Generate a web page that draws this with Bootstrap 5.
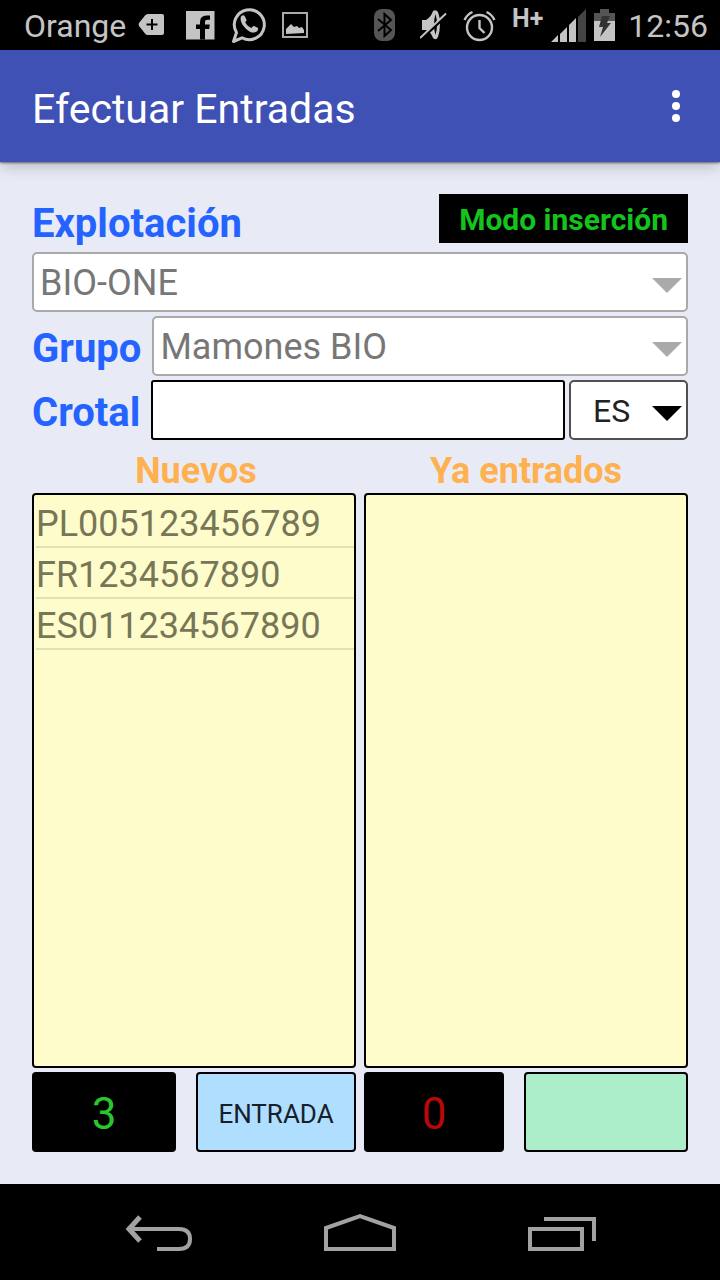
<!DOCTYPE html>
<html lang="es">
<head>
<meta charset="utf-8">
<meta name="viewport" content="width=device-width, initial-scale=1">
<title>Efectuar Entradas</title>
<link href="https://cdn.jsdelivr.net/npm/bootstrap@5.3.0/dist/css/bootstrap.min.css" rel="stylesheet">
<style>
  body { font-family: Roboto, "Noto Sans", sans-serif; background: #e8ebf5; line-height: 1.2; }
  svg { display: block; flex: none; }
  .status { height: 50px; padding: 2px 12px 0 24px; background: #000; color: #c4c4c4; font-size: 32px; }
  .status-network { height: 34px; font-size: 25px; font-weight: 700; line-height: 20px; }
  .gap-status { gap: 12px; }
  .app-bar { height: 112px; padding: 0 32px; background: #3f51b5; color: #fff; box-shadow: 0 1px 2px rgba(0,0,0,.5), 0 4px 14px rgba(0,0,0,.22); }
  .app-title { padding-top: 5px; font-size: 41px; font-weight: 400; line-height: 48px; }
  .menu-btn { width: 24px; height: 40px; }
  .content { padding: 32px; }
  .field-label { padding-top: 6px; color: #2463ff; font-size: 40px; font-weight: 700; line-height: 48px; }
  .mode { background: #000; color: #14c31d; font-size: 30px; font-weight: 700; padding: 2px 20px 0; height: 49px; }
  .field { height: 60px; border: 2px solid #a9a9a9; border-radius: 5px; background-color: #fff; color: #777; font-size: 36px; line-height: 40px; padding: 6px 40px 4px 6px; box-shadow: none; }
  .field.form-select { background-image: url("data:image/svg+xml,%3Csvg xmlns='http://www.w3.org/2000/svg' viewBox='0 0 30 15'%3E%3Cpath fill='%23aaa' d='M0 0h30L15 15z'/%3E%3C/svg%3E"); background-size: 30px 15px; background-position: right 4px top 24px; opacity: 1; }
  .field.form-select:disabled { background-color: #fff; color: #777; }
  .field-code { border-color: #000; border-radius: 3px; color: #222; }
  .field.field-country { width: 119px; border-color: #505050; color: #222; font-size: 32px; padding-left: 22px; background-image: url("data:image/svg+xml,%3Csvg xmlns='http://www.w3.org/2000/svg' viewBox='0 0 30 15'%3E%3Cpath d='M0 0h30L15 15z'/%3E%3C/svg%3E"); }
  .list-title { height: 53px; padding-top: 9px; color: #ffb04f; font-size: 36px; font-weight: 700; line-height: 44px; }
  .panel { border: 2px solid #000; border-radius: 4px; background: #fefccb; padding: 2px 0 0 2px; }
  .panel li { height: 51px; border-bottom: 2px solid #e2e1b4; color: #777656; font-size: 36px; line-height: 54px; }
  .counter { height: 80px; padding-top: 4px; border-radius: 4px; background: #000; font-size: 44px; }
  .counter-new { color: #26c72f; }
  .counter-done { color: #b90808; }
  .action { height: 80px; border: 2px solid #000; border-radius: 4px; color: #16202a; font-size: 26px; }
  .action-entry { width: 160px; background: #b0deff; }
  .action-done { width: 164px; background: #abeec9; }
  .gap-xs { gap: 4px; }
  .gap-field { gap: 11px; }
  .gap-block { gap: 20px; }
  .nav-keys { height: 96px; background: #000; padding: 2px 58px 0; }
</style>
</head>
<body>
<div class="min-vh-100 d-flex flex-column">
  <div class="status d-flex align-items-center justify-content-between">
    <div class="d-flex align-items-center">
      <span class="me-2 pe-1">Orange</span>
      <svg class="me-3" width="32" height="24" viewBox="0 0 32 24" fill="#c4c4c4"><path fill-rule="evenodd" d="M10 0h14q2 0 2 2v17q0 2-2 2H10q-2 0-3-1.500L1 12q-.8-1.500 0-3l6-7.500Q8 0 10 0zM13 5v4.500H8.500v2H13V16h2v-4.500h4.500v-2H15V5z"/></svg>
      <svg class="me-3" width="29" height="29" viewBox="0 0 29 29"><path fill="#c4c4c4" d="M0 0h28.500v28.500H0z"/><path d="M14 28.500V18h-4v-4.500h4V11q0-6.500 6.500-6.500H24v4.200h-2.500q-2.500 0-2.500 2v2.800h4.800l-.6 4.500H19v10.500z" fill="#000"/></svg>
      <svg class="me-3" width="35" height="38" viewBox="0 0 35 38"><path d="M2.500 34.500 5.500 25.500A15 15 0 1 1 11 30.800z" fill="none" stroke="#c4c4c4" stroke-width="3" stroke-linejoin="round"/><path fill="#c4c4c4" d="M10 9.500q1.500-2 3.500-.8l2 4q.3 1-1.300 2.600 2.300 4.400 6.300 5.700l2-2.300 4.600 2.300q.6 3.700-4 4.500-3.600.4-8-3.600-7-6.400-5.100-12.400z"/></svg>
      <svg width="26" height="28" viewBox="0 0 26 28"><path d="M1 1h24v24H1z" fill="none" stroke="#aaa" stroke-width="2"/><path fill="#c4c4c4" d="M4 22v-5l5-5 3 3 3-1 2 2 3-1 2 3v3z"/></svg>
    </div>
    <div class="d-flex align-items-center">
      <svg width="22" height="34" viewBox="0 0 22 34"><rect width="21" height="32" rx="8" fill="#555"/><path d="m4 10 13 11-6.500 6V5l6.500 6L4 22" fill="none" stroke="#000" stroke-width="2"/></svg>
      <svg class="ms-4" width="27" height="34" viewBox="0 0 27 34"><path d="M2 11h4q5-3 7-9 3-2 5 1 2 5 2 12t-2 13q-2 4-5 1-2-6-7-8H2z" fill="#c4c4c4"/><path d="M15.500 5q3 10 0 21-3-11 0-21z" fill="#000"/><path d="M0 31 27 6" stroke="#000" stroke-width="3"/><path d="M0 29 26 4.500" stroke="#c4c4c4" stroke-width="2"/></svg>
      <svg class="ms-3 me-3" width="33" height="34" viewBox="0 0 33 34" fill="none" stroke="#c4c4c4" stroke-width="2.400"><circle cx="16.500" cy="18.500" r="12.500"/><path d="M16.500 11v8l5 5M1.500 11q3-6 8-8M31.500 11q-3-6-8-8"/></svg>
      <span class="status-network">H+</span>
      <svg class="ms-2" width="35" height="34" viewBox="0 0 35 34"><path fill="#c4c4c4" d="M0 33 7 26v7zM9 25l7-7v15H9zM18 16l7-7v24h-7z"/><path fill="#444" d="m27 8 8-8v33h-8z"/></svg>
      <svg class="ms-2 me-2" width="22" height="34" viewBox="0 0 22 34"><path fill="#555" d="M0 4h6V0h9v4h6v8H0z"/><path fill="#c4c4c4" d="M0 12h21v20H0z"/><path d="M8 7h8l-3 7h4L6 28l3-10H5z" fill="#333"/></svg>
      <span class="ps-1">12:56</span>
    </div>
  </div>

  <header class="app-bar d-flex align-items-center justify-content-between">
    <h1 class="app-title m-0">Efectuar Entradas</h1>
    <button type="button" class="menu-btn btn border-0 p-0 d-flex align-items-center justify-content-center" aria-label="Más opciones">
      <svg width="8" height="32" viewBox="0 0 8 32" fill="#fff"><circle cx="4" cy="4" r="4"/><circle cx="4" cy="16" r="4"/><circle cx="4" cy="28" r="4"/></svg>
    </button>
  </header>

  <main class="content flex-grow-1 d-flex flex-column">
    <div class="d-flex justify-content-between align-items-start">
      <label class="field-label pb-1" for="explotacion">Explotación</label>
      <div class="mode d-flex align-items-center">Modo inserción</div>
    </div>
    <div class="d-flex flex-column gap-xs">
      <select id="explotacion" class="field form-select" disabled><option>BIO-ONE</option></select>
      <div class="d-flex align-items-center gap-field">
        <label class="field-label" for="grupo">Grupo</label>
        <select id="grupo" class="field form-select" disabled><option>Mamones BIO</option></select>
      </div>
      <div class="d-flex align-items-center gap-field">
        <label class="field-label" for="crotal">Crotal</label>
        <div class="d-flex flex-grow-1 gap-xs">
          <input id="crotal" type="text" class="field field-code form-control">
          <select class="field field-country form-select flex-shrink-0" aria-label="País"><option>ES</option></select>
        </div>
      </div>
    </div>

    <div class="d-flex flex-grow-1 gap-2">
      <section class="d-flex flex-column flex-fill w-50">
        <h2 class="list-title text-center m-0 ps-1">Nuevos</h2>
        <ul class="panel list-unstyled flex-grow-1 mb-1">
          <li>PL005123456789</li>
          <li>FR1234567890</li>
          <li>ES011234567890</li>
        </ul>
        <div class="d-flex gap-block">
          <div class="counter counter-new flex-grow-1 d-flex align-items-center justify-content-center">3</div>
          <button type="button" class="action action-entry btn px-0 pt-1 pb-0">ENTRADA</button>
        </div>
      </section>
      <section class="d-flex flex-column flex-fill w-50">
        <h2 class="list-title text-center m-0">Ya entrados</h2>
        <ul class="panel list-unstyled flex-grow-1 mb-1"></ul>
        <div class="d-flex gap-block">
          <div class="counter counter-done flex-grow-1 d-flex align-items-center justify-content-center">0</div>
          <button type="button" class="action action-done btn p-0" aria-label="Deshacer entrada"></button>
        </div>
      </section>
    </div>
  </main>

  <nav class="nav-keys d-flex align-items-center justify-content-around" aria-label="Sistema">
    <button type="button" class="btn border-0 p-0" aria-label="Atrás"><svg width="70" height="40" viewBox="0 0 70 40" fill="none" stroke="#a2a2a2" stroke-width="4"><path d="M7 16h49q11 0 11 10t-11 10H34"/><path d="M17 4 6 16l11 12" stroke-width="5"/></svg></button>
    <button type="button" class="btn border-0 p-0" aria-label="Inicio"><svg width="72" height="40" viewBox="0 0 72 40" fill="none" stroke="#a2a2a2" stroke-width="4"><path d="M2 36V15L36 3l34 12v21z"/></svg></button>
    <button type="button" class="btn border-0 p-0" aria-label="Recientes"><svg width="70" height="40" viewBox="0 0 70 40" fill="none" stroke="#a2a2a2" stroke-width="4"><path d="M3 16h52v20H3zM17 6h50v22"/></svg></button>
  </nav>
</div>
<script src="https://cdn.jsdelivr.net/npm/bootstrap@5.3.0/dist/js/bootstrap.bundle.min.js"></script>
</body>
</html>
